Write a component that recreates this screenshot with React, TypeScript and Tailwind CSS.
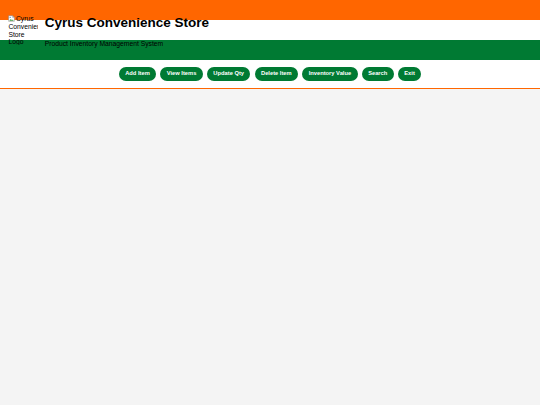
import React from "react";

const buttons = [
  "Add Item",
  "View Items",
  "Update Qty",
  "Delete Item",
  "Inventory Value",
  "Search",
  "Exit",
];

function BrokenImageIcon() {
  return (
    <svg
      width="7"
      height="7"
      viewBox="0 0 16 16"
      className="inline-block align-top mr-[0.5px]"
    >
      <path d="M1.5 1.5h9l4 4v9h-13z" fill="#fff" stroke="#8a8a8a" strokeWidth="1.2" />
      <path d="M10.5 1.5v4h4" fill="none" stroke="#8a8a8a" strokeWidth="1.2" />
      <path d="M3 13l3.5-4 2.5 3 1.5-1.5 2.5 2.5z" fill="#3a9a3a" />
      <circle cx="5" cy="5.5" r="1.4" fill="#4a8ad4" />
    </svg>
  );
}

export default function App() {
  return (
    <div className="min-h-screen bg-[#f4f4f4] font-['Liberation_Sans',Arial,sans-serif] text-black">
      <header className="h-[60px] flex items-center px-[8.4px] gap-[6.3px] bg-[linear-gradient(to_bottom,#ff6600_33.33%,#ffffff_33.33%,#ffffff_66.66%,#007a33_66.66%)]">
        <div className="w-[30px] h-[30px] overflow-hidden text-[6.75px] leading-[1.15] shrink-0">
          <span className="whitespace-normal">
            <BrokenImageIcon />
            Cyrus Convenience Store Logo
          </span>
        </div>
        <div className="pt-[3px]">
          <h1 className="text-[13.5px] leading-[1.15] font-bold m-0">
            Cyrus Convenience Store
          </h1>
          <p className="text-[6.75px] leading-[1.15] mt-[9px]">
            Product Inventory Management System
          </p>
        </div>
      </header>
      <nav className="h-[29.3px] bg-white border-b-[1.3px] border-[#ff6600] flex justify-center items-center gap-[4.2px]">
        {buttons.map((b) => (
          <button
            key={b}
            className="h-[14px] px-[6.4px] rounded-full bg-[#007a33] text-white text-[5.75px] font-bold leading-none"
          >
            {b}
          </button>
        ))}
      </nav>
    </div>
  );
}
